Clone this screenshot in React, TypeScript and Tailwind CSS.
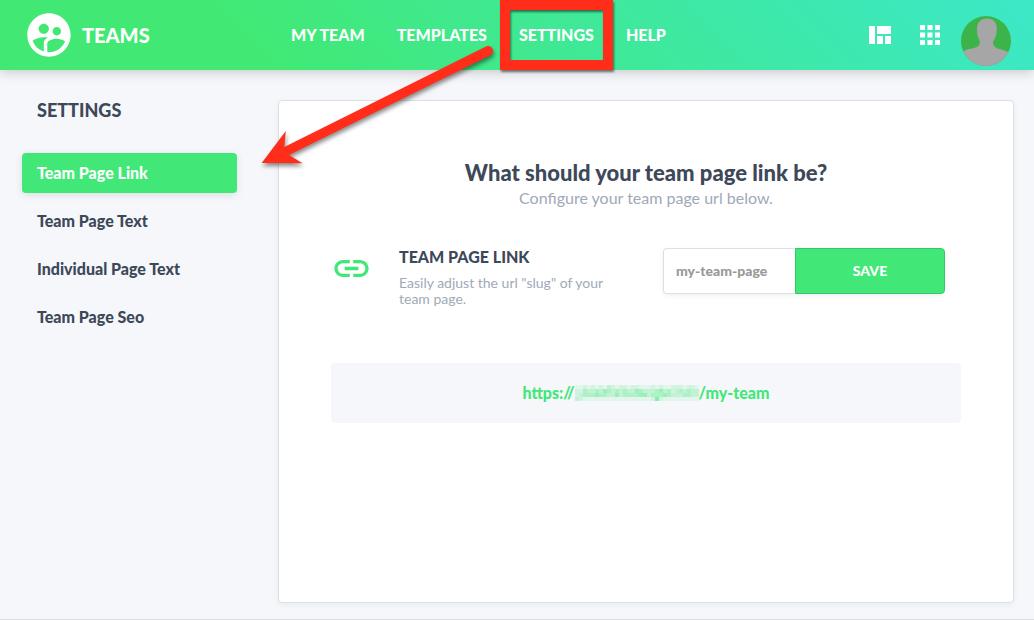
import { useState } from 'react';
import { MdLink, MdSupervisedUserCircle } from 'react-icons/md';

const navLinks = ['My Team', 'Templates', 'Settings', 'Help'];

const sections = ['Team Page Link', 'Team Page Text', 'Individual Page Text', 'Team Page Seo'];

// opacity levels (0-9) of the blocks that hide the domain
const maskRows = [
  '1121212132122122111212112221221',
  '2243343543434335433345342343433',
  '2344454433534444553444543334433',
  '3211111111111111111262111111111',
];

const QuiltIcon = () => (
  <svg width="22" height="18" viewBox="0 0 22 18" fill="currentColor" aria-hidden="true">
    <path d="M0 0h6v18H0zM8 0h14v8H8zM8 10h6v8H8zM16 10h6v8h-6z" />
  </svg>
);

const AppsIcon = () => (
  <svg width="20" height="20" viewBox="0 0 20 20" fill="currentColor" aria-hidden="true">
    <path d="M0 0h5v5H0zM7.5 0h5v5h-5zM15 0h5v5h-5zM0 7.5h5v5H0zM7.5 7.5h5v5h-5zM15 7.5h5v5h-5zM0 15h5v5H0zM7.5 15h5v5h-5zM15 15h5v5h-5z" />
  </svg>
);

const Avatar = () => (
  <svg width="50" height="50" viewBox="0 0 50 50" aria-hidden="true">
    <defs>
      <clipPath id="avatar-clip">
        <circle cx="25" cy="25" r="25" />
      </clipPath>
    </defs>
    <g clipPath="url(#avatar-clip)">
      <rect width="50" height="50" fill="#3cb44a" />
      <path
        fill="#a6a6a6"
        d="M26 2.5c6 0 10 4 9.800 10.500 0 3-.3 5.500-1.600 8.500-.7 2-1.900 3.200-2.200 5.300.2 3 1.700 4.700 4.500 5.700 4 1.300 8.500 1.800 11.500 4V50H2V35.500c3-2.200 7-2.400 11-3.500 3.500-.8 5.700-2.500 6-5.500-.2-2-1.200-3-1.800-5-1-3-1.200-5.500-1.200-8.500C16 6.500 20 2.500 26 2.500z"
      />
    </g>
  </svg>
);

const Arrow = () => (
  <svg
    className="absolute left-[256px] top-[40px] pointer-events-none drop-shadow-[1px_3px_2px_rgba(0,0,0,0.45)]"
    width="244"
    height="130"
    viewBox="256 40 244 130"
    aria-hidden="true"
  >
    <path d="M486 46.500a4.800 4.800 0 0 1 4.300 8.800L289 155l13.500 8.300L261.700 163l24.100-32-1.500 16z" fill="#ff2d1a" />
  </svg>
);

const MaskedDomain = () => (
  <svg width="124" height="16" viewBox="0 0 124 16" className="text-[#41e878]" aria-hidden="true">
    {maskRows.map((row, y) =>
      row.split('').map((level, x) => (
        <rect
          key={`${x}-${y}`}
          x={x * 4}
          y={y * 4}
          width="4"
          height="4"
          fill="currentColor"
          opacity={Number(level) / 10}
        />
      ))
    )}
  </svg>
);

const Header = () => (
  <header className="relative z-10 h-[70px] flex items-center text-white bg-[linear-gradient(45deg,#41e974_25%,#3ce8c8)] shadow-[0_2px_12px_rgba(0,0,0,0.2)]">
    <a href="#" className="flex items-center gap-[7px] pl-[23px] w-[291px] text-xl font-black">
      <MdSupervisedUserCircle size={52} />
      TEAMS
    </a>
    <nav className="flex gap-8 font-black uppercase">
      {navLinks.map((link) => (
        <a key={link} href="#" className="relative">
          {link}
          {link === 'Settings' && (
            <span className="absolute -inset-x-[19px] -inset-y-[23px] border-10 border-[#ff2d1a] pointer-events-none drop-shadow-[1px_2px_1px_rgba(0,0,0,0.5)]" />
          )}
        </a>
      ))}
    </nav>
    <div className="flex items-center ml-auto pr-[23px]">
      <button type="button" aria-label="Layout" className="mr-[29px]">
        <QuiltIcon />
      </button>
      <button type="button" aria-label="Apps" className="mr-[21px]">
        <AppsIcon />
      </button>
      <button type="button" aria-label="Account" className="pt-3">
        <Avatar />
      </button>
    </div>
    <Arrow />
  </header>
);

const App = () => {
  const [active, setActive] = useState(sections[0]);
  const [slug, setSlug] = useState('');

  return (
    <div className="min-h-screen flex flex-col bg-[#f6f7fb] border-b border-[#d9dde3] font-['Lato',sans-serif] text-[#3d4859]">
      <Header />
      <div className="flex-1 flex">
        <aside className="w-[278px] shrink-0 pl-[22px] pr-[41px] pt-[26px]">
          <h2 className="px-[15px] text-lg leading-7 font-black">SETTINGS</h2>
          <ul className="flex flex-col gap-2 mt-[29px]">
            {sections.map((section) => (
              <li key={section}>
                <button
                  type="button"
                  onClick={() => setActive(section)}
                  className={`w-full h-10 px-[15px] rounded text-left font-black ${
                    section === active ? 'bg-[#41e878] text-white shadow-[0_2px_8px_rgba(0,0,0,0.1)]' : ''
                  }`}
                >
                  {section}
                </button>
              </li>
            ))}
          </ul>
        </aside>
        <main className="flex-1 mt-[30px] mr-5 mb-4 px-[52px] pt-14 pb-10 bg-white border border-[#d9e0e9] rounded shadow-[0_2px_6px_rgba(0,0,0,0.05)]">
          <h1 className="text-center text-[22px] leading-8 font-black">What should your team page link be?</h1>
          <p className="text-center leading-[18px] text-[#a0a9b8]">Configure your team page url below.</p>
          <form className="flex items-start mt-[41px] pr-4" onSubmit={(e) => e.preventDefault()}>
            <MdLink size={41} className="shrink-0 text-[#41e878]" />
            <div className="flex-1 pl-[27px]">
              <label htmlFor="slug" className="block leading-[18px] font-black">
                TEAM PAGE LINK
              </label>
              <p className="mt-[9px] max-w-56 text-sm leading-4 text-[#a0a9b8]">
                Easily adjust the url "slug" of your team page.
              </p>
            </div>
            <div className="flex h-[46px] rounded shadow-[0_2px_5px_rgba(0,0,0,0.06)]">
              <input
                id="slug"
                value={slug}
                onChange={(e) => setSlug(e.target.value)}
                placeholder="my-team-page"
                className="w-[132px] px-3 border border-r-0 border-[#d9e0e9] rounded-l text-sm font-black placeholder:text-[#999999]"
              />
              <button
                type="submit"
                className="w-[150px] bg-[#41e878] border border-[#35c866] rounded-r text-sm font-black text-white"
              >
                SAVE
              </button>
            </div>
          </form>
          <a
            href="#"
            className="flex items-center justify-center mt-14 h-[60px] rounded bg-[#f6f7fb] font-black text-[#41e878]"
          >
            https://
            <MaskedDomain />
            /my-team
          </a>
        </main>
      </div>
    </div>
  );
};

export default App;
